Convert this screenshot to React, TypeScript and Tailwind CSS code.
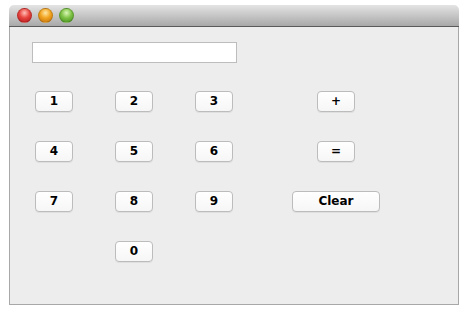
const keys: { label: string; col: number; row: number; wide?: boolean }[] = [
  { label: "1", col: 1, row: 1 },
  { label: "2", col: 2, row: 1 },
  { label: "3", col: 3, row: 1 },
  { label: "+", col: 4, row: 1 },
  { label: "4", col: 1, row: 2 },
  { label: "5", col: 2, row: 2 },
  { label: "6", col: 3, row: 2 },
  { label: "=", col: 4, row: 2 },
  { label: "7", col: 1, row: 3 },
  { label: "8", col: 2, row: 3 },
  { label: "9", col: 3, row: 3 },
  { label: "Clear", col: 4, row: 3, wide: true },
  { label: "0", col: 2, row: 4 },
];

const colClass = ["", "col-start-1", "col-start-2", "col-start-3", "col-start-4"];
const rowClass = ["", "row-start-1", "row-start-2", "row-start-3", "row-start-4"];

const Light = ({ color }: { color: string }) => (
  <span className={`block w-[15px] h-[15px] rounded-full border border-black/15 ${color}`} />
);

export default function App() {
  return (
    <div className="bg-white w-[469px] h-[311px] pt-[5px] pl-[9px] font-['DejaVu_Sans',sans-serif]">
      <div className="w-[450px] h-[300px] flex flex-col">
        <div className="h-[22px] rounded-t-[5px] border-b border-[#5a5a5a] bg-gradient-to-b from-[#e4e4e4] to-[#a9a9a9] flex items-center gap-[6px] pl-[8px]">
          <Light color="bg-[radial-gradient(circle_at_50%_30%,#ffc0b8_0%,#e8453f_45%,#b0151a_100%)]" />
          <Light color="bg-[radial-gradient(circle_at_50%_30%,#ffe8a8_0%,#f2a522_45%,#bf6c08_100%)]" />
          <Light color="bg-[radial-gradient(circle_at_50%_30%,#dcf8b8_0%,#80c347_45%,#3f8c1a_100%)]" />
        </div>
        <div className="flex-1 bg-[#ededed] border-x border-b border-[#a8a8a8]">
          <input
            readOnly
            className="block mt-[15px] ml-[22px] w-[205px] h-[21px] bg-white border border-[#bdbdbd] outline-none"
          />
          <div className="ml-[4px] mt-[13px] grid grid-cols-[80px_80px_80px_164px] grid-rows-[50px_50px_50px_50px]">
            {keys.map((k) => (
              <div
                key={k.label}
                className={`${colClass[k.col]} ${rowClass[k.row]} flex items-center justify-center`}
              >
                <button
                  className={`${k.wide ? "w-[88px]" : "w-[38px]"} h-[21px] rounded-[4px] border border-[#bcbcbc] bg-gradient-to-b from-white to-[#f6f6f6] shadow-[0_1px_0_rgba(0,0,0,0.06)] text-[12px] font-bold text-black leading-none`}
                >
                  {k.label}
                </button>
              </div>
            ))}
          </div>
        </div>
      </div>
    </div>
  );
}
